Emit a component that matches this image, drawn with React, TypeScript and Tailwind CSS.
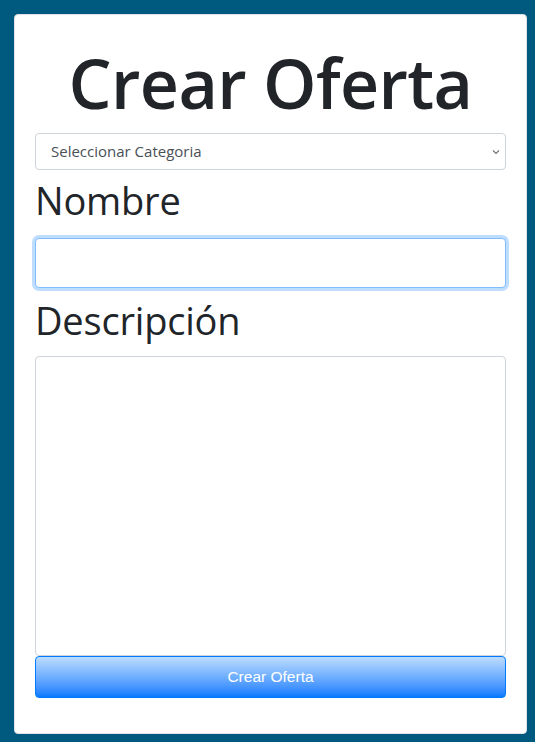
import React from "react";

const sans = { fontFamily: '"Open Sans", "Noto Sans", sans-serif' };

export default function App() {
  return (
    <div className="min-h-[742px] w-full bg-[#005a80] pt-[14px] pl-[14px] pr-[8px] pb-[8px]" style={sans}>
      <div className="flex flex-col rounded-[4px] border border-[#dee2e6] bg-white pl-[20px] pr-[20px] pt-[28px] pb-[35px] h-[720px]">
        <h1 className="text-center text-[68px] leading-[80px] font-semibold tracking-[-0.6px] text-[#212529]">
          Crear Oferta
        </h1>
        <div className="relative mt-[10px]">
          <select className="h-[37px] w-full appearance-none rounded-[4px] border border-[#ced4da] bg-white pl-[15px] text-[15px] text-[#495057] outline-none">
            <option>Seleccionar Categoria</option>
          </select>
          <svg className="pointer-events-none absolute right-[6px] top-[16px]" width="8" height="6" viewBox="0 0 8 6">
            <path d="M1 1.5 L4 4.5 L7 1.5" fill="none" stroke="#6c757d" strokeWidth="1.2" />
          </svg>
        </div>
        <label className="mt-[6px] block text-[38px] leading-[48px] font-normal tracking-[-0.2px] text-[#212529]">Nombre</label>
        <input
          type="text"
          className="mt-[14px] h-[50px] w-full rounded-[4px] border border-[#80bdff] bg-white shadow-[0_0_0_3px_rgba(0,123,255,0.25)] outline-none"
        />
        <label className="mt-[5px] block text-[38px] leading-[54px] font-normal tracking-[-0.2px] text-[#212529]">Descripción</label>
        <textarea className="mt-[9px] h-[300px] w-full resize-none rounded-[4px] border border-[#ced4da] bg-white outline-none" />
        <button
          className="h-[42px] w-full rounded-[4px] border border-[#007bff] bg-gradient-to-b from-[#bcdcff] to-[#007bff] text-[15.5px] text-white"
          style={{ fontFamily: '"Liberation Sans", Arial, sans-serif' }}
        >
          Crear Oferta
        </button>
      </div>
    </div>
  );
}
